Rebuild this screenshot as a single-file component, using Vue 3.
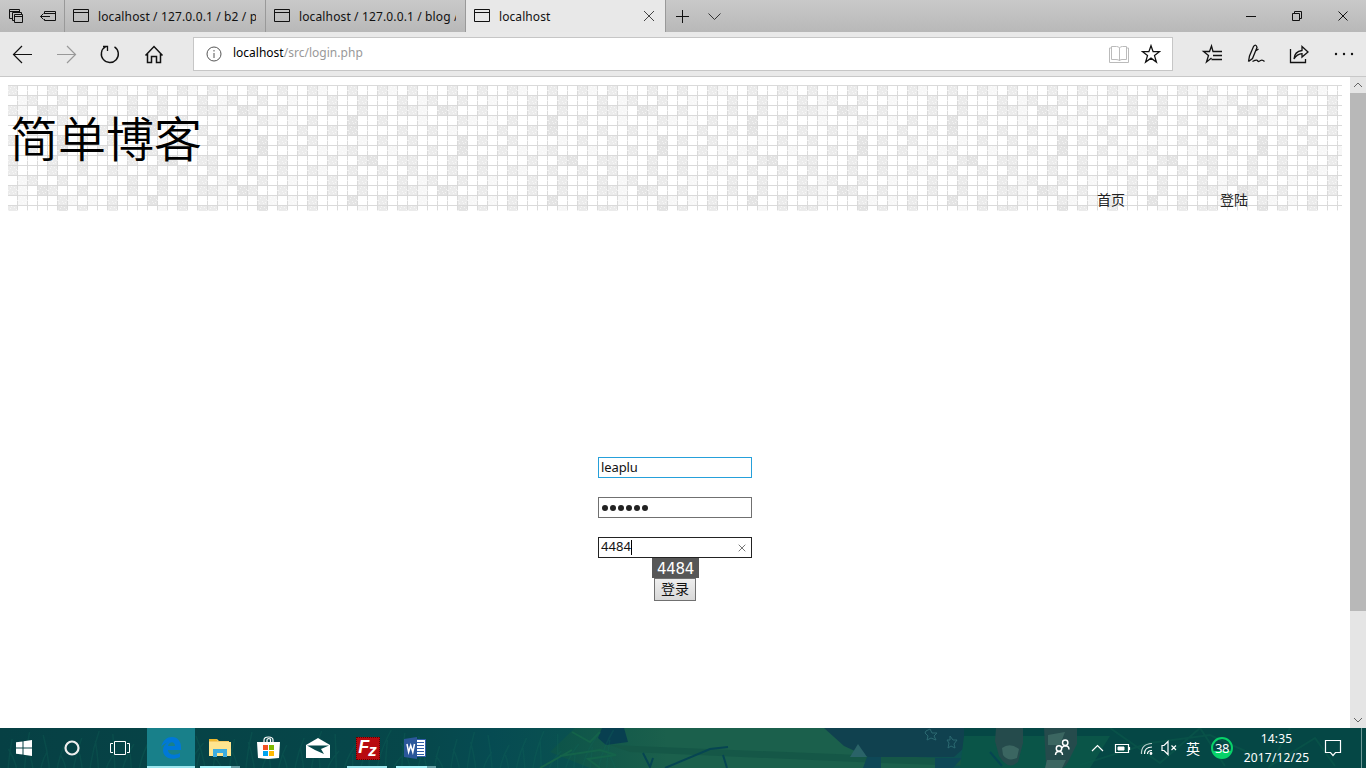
<script setup>
const tabs = [
  { title: 'localhost / 127.0.0.1 / b2 / p', active: false },
  { title: 'localhost / 127.0.0.1 / blog /', active: false },
  { title: 'localhost', active: true },
]

// Header mosaic: each string is a row of 20 cells (l = light, m = medium, d = dark)
const rows = [
  'm...m..m..ml..m..ml.',
  '.lm..m..l...m..m...m',
  'ml.dm..m....m..m...m',
  '.l...ml.l.m...d..m..',
  '..m.l....m..m.d....m',
  'm....d.m..m....l.m..',
  '..m..d...m.l.lm...l.',
  'm...m..m....m..md..m',
  'm...m..m..ml..m..m..',
  '.lm..m..l...m..m...m',
  'ml.dm..m....m..m...m',
  '.l...ml.l.m...d..m..',
  'm....d.m..m....l.m.m',
]
const fills = { l: '#f7f7f7', m: '#ebebeb', d: '#e4e4e4' }
const cells = []
rows.forEach((r, y) => [...r].forEach((c, x) => {
  if (c !== '.') cells.push({ x: x * 10, y: y * 10, fill: fills[c] })
}))

const blades = Array.from({ length: 76 }, (_, i) => {
  const x = i * 8.2
  const h = 12 + ((i * 17) % 27)
  const lean = ((i * 13) % 25) - 9
  return `M${x} 40Q${x + lean / 4} ${40 - h / 2} ${x + lean} ${40 - h}`
}).join('')
</script>

<template>
  <div class="screen">
    <header class="tabbar">
      <div class="tabtools">
        <svg width="64" height="32" fill="none" stroke="#111">
          <path d="M12 18.500H9.500V9.500H19.500V12M9.500 11.500H19M14 20.500H12.500V12.500H21.500V14M14.500 14.500H22.500V22.500H14.500zM14.500 16.500H22.500" />
          <path d="M44.500 14V11.500H55.500V20.500H44.500V19M44.500 13.500H55.500M40.500 16.500H50M43.500 13.500L40.500 16.500L43.500 19.500" />
        </svg>
      </div>
      <div v-for="t in tabs" :key="t.title" class="tab" :class="{ active: t.active }">
        <svg class="pageicon" width="16" height="14" fill="none" stroke="#111"><path d="M.5 .5H15.500V12.500H.5zM.5 3.500H15.500" /></svg>
        <span class="tabtitle">{{ t.title }}</span>
        <svg v-if="t.active" class="tabclose" width="12" height="12" stroke="#444"><path d="M1 1L11 11M11 1L1 11" /></svg>
      </div>
      <div class="newtab">
        <svg width="64" height="32" fill="none" stroke="#111"><path d="M10 16.500H23M16.500 10V23" /><path d="M42.500 13.500L48.500 19.500L54.500 13.500" stroke="#333" /></svg>
      </div>
      <svg class="wincontrols" width="138" height="32" fill="none" stroke="#111">
        <path d="M18 16.500H28M64.500 13.500H71.500V20.500H64.500zM66.500 13V11.500H73.500V18.500H72M110.500 11.500L119.500 20.500M119.500 11.500L110.500 20.500" />
      </svg>
    </header>

    <div class="toolbar">
      <svg class="nav" width="193" height="44" fill="none" stroke="#111" stroke-width="1.200">
        <path d="M13 22.500H32M22 14L13.500 22.500L22 31" />
        <path d="M57 22.500H75.500M67 14L75.500 22.500L67 31" stroke="#999" />
        <path d="M105.500 14.700A8.500 8.500 0 1 0 114.500 14.900" stroke-width="1.400" /><path d="M103 14.500H107.500V19" stroke-width="1.300" />
        <path d="M145.500 23.500L154 14.500L162.500 23.500M147.500 22V30.500H151.500V24.500H156.500V30.500H160.500V22" stroke-width="1.500" />
      </svg>
      <div class="address">
        <svg width="16" height="16" fill="none" stroke="#555"><circle cx="8" cy="8" r="7" /><path d="M8 7V12M8 4V5.500" /></svg>
        <span class="url"><b>localhost</b>/src/login.php</span>
        <svg class="reader" width="20" height="20" fill="none" stroke="#bbb"><path d="M2.500 2.500H7.500Q10 2.500 10.500 4Q11 2.500 13.500 2.500H17.500V15.500H13Q10.500 15.500 10.500 17Q10.500 15.500 7 15.500H2.500zM10.500 4V17M2.500 4H.5V18.500H19.500V4H17.500" /></svg>
        <svg class="star" width="20" height="20" fill="none" stroke="#111" stroke-width="1.300"><path d="M10 1.700L12.100 7.700H18.500L13.500 11.600L15.400 18L10 14.100L4.600 18L6.500 11.600L1.500 7.700H7.900Z" /></svg>
      </div>
      <svg class="actions" width="193" height="44" fill="none" stroke="#111" stroke-width="1.300">
        <path d="M49 19.500H40L38.500 14L36.500 19.500H30.500L35.500 23.500L33.500 30L38.500 26M40 23.500H49M38.500 27.500H49" />
        <path d="M75.500 29.500L76.500 24L80.500 14.500Q83 11.500 84 15.500L79.500 26.500L75.500 29.500M82.500 19L85.500 17M79.500 29.500Q83.500 27.500 84.500 28.500Q85 30.500 87.500 28.500Q89.500 27.500 91.500 29.500" />
        <path d="M117.500 17V30.500H132.500V27M121 27Q121.500 19.500 129 18.500V14.500L135 20L129 25V21.700Q124 22 121 27Z" />
        <g fill="#111" stroke="none"><circle cx="163" cy="22" r="1.200" /><circle cx="171" cy="22" r="1.200" /><circle cx="179" cy="22" r="1.200" /></g>
      </svg>
    </div>

    <div class="viewport">
      <main class="page">
        <div class="banner">
          <svg class="mosaic" width="1334" height="126">
            <defs>
              <pattern id="tile" width="200" height="130" patternUnits="userSpaceOnUse">
                <rect v-for="(c, i) in cells" :key="i" :x="c.x" :y="c.y" width="10" height="10" :fill="c.fill" />
              </pattern>
              <pattern id="lines" width="10" height="10" patternUnits="userSpaceOnUse">
                <path d="M0 .5H10M9.500 0V10" stroke="#dadada" fill="none" />
                <path d="M2 3h1v1h-1zM6 2h1v1h-1zM4 6h1v1h-1zM7 7h1v1h-1zM1 8h1v1h-1zM9 5h1v1h-1zM3 1h1v1h-1zM8 4h1v1h-1zM5 8h1v1h-1zM0 5h1v1h-1z" fill="#fff" fill-opacity=".6" />
              </pattern>
            </defs>
            <rect width="1334" height="126" fill="url(#tile)" />
            <rect width="1334" height="126" fill="url(#lines)" />
          </svg>
          <h1>简单博客</h1>
          <nav class="menu"><span>首页</span><span>登陆</span></nav>
        </div>
        <form class="login">
          <div class="field user">leaplu</div>
          <div class="field secret"><i v-for="n in 6" :key="n"></i></div>
          <div class="field code"><span>4484</span><em></em>
            <svg width="8" height="8" stroke="#777"><path d="M.7 .7L7.300 7.300M7.300 .7L.7 7.300" /></svg>
          </div>
          <div class="captcha">4484</div>
          <div class="submit">登录</div>
        </form>
      </main>
      <aside class="scroll">
        <svg width="16" height="16" fill="none" stroke="#666"><path d="M4 10L8 6L12 10" /></svg>
        <div class="thumb"></div>
        <svg class="down" width="16" height="16" fill="none" stroke="#666"><path d="M4 6L8 10L12 6" /></svg>
      </aside>
    </div>

    <footer class="taskbar">
      <svg class="scene" width="1366" height="40">
        <defs>
          <linearGradient id="meadow" x1="0" x2="1"><stop offset="0" stop-color="#0c5349" /><stop offset=".3" stop-color="#1b604c" /><stop offset="1" stop-color="#1b604c" /></linearGradient>
        </defs>
        <path d="M575 0H830L875 30L940 34V40H590L550 24Z" fill="url(#meadow)" />
        <path d="M610 17L860 27L1000 32V39L880 35L630 24Z" fill="#155747" />
        <path d="M824 0H964V20L954 29H868L844 18Z" fill="#10414f" />
        <path d="M867 29H881V40H863ZM935 30H962L953 40H935Z" fill="#0e4857" />
        <path d="M858 16L867 29H850Z" fill="#2a6368" />
        <path d="M602 0H624L628 14L606 17L598 10Z" fill="#083f50" />
        <path d="M964 0H1366V40H964Z" fill="#054745" />
        <path d="M964 8H1110L1090 40H960Z" fill="#0a5548" />
        <path d="M996 0H1023V15L1018 34Q1008 43 999 28L995 13ZM1044 0H1077V16L1068 34Q1060 48 1046 36Z" fill="#254b4c" />
        <path d="M1002 20Q1010 14 1019 21L1017 30Q1008 34 1003 27ZM1048 7L1065 4L1060 17H1048ZM1047 32L1066 32L1062 40H1045Z" fill="#3b6661" />
        <path :d="blades" fill="none" stroke="#13685a" stroke-opacity=".28" stroke-width="1.500" />
        <path d="M560 28L600 22L616 27L588 31L600 40M540 40L572 22M572 4L590 14L600 4" fill="none" stroke="#14634a" stroke-width="2" />
        <path d="M665 40L710 21L728 19M643 25L650 39L653 30M723 27L727 40M990 24L1002 38" fill="none" stroke="#064552" stroke-width="2" />
        <path d="M926 3L930 1L932 5L937 5L934 8L936 12L931 10L927 12L928 8L925 5ZM950 8L953 12L957 12L954 16L955 20L951 18L948 20L949 15L947 12L950 12Z" fill="none" stroke="#2b6971" />
        <path d="M1080 37L1150 15L1210 7L1265 32M1110 0L1160 35L1200 0L1225 38M1290 0L1270 38L1315 10L1335 38" fill="none" stroke="#0b5a4a" stroke-width="2" stroke-opacity=".55" />
        <path d="M1361.500 0V40" stroke="#6f9a98" />
      </svg>
      <div class="launch">
        <div class="sys"><svg width="16" height="16" fill="#fff"><path d="M0 2.300L6.500 1.400V7.500H0zM7.500 1.200L16 0V7.500H7.500zM0 8.500H6.500V14.600L0 13.700zM7.500 8.500H16V16L7.500 14.800z" /></svg></div>
        <div class="sys"><svg width="16" height="16" fill="none"><circle cx="8" cy="8" r="6.500" stroke="#eee" stroke-width="2.200" /></svg></div>
        <div class="sys wide"><svg width="20" height="16" fill="none" stroke="#fff"><path d="M4.500 1.500H15.500V14.500H4.500zM3 3.500H.5V12.500H3M17 3.500H19.500V12.500H17" /></svg></div>
        <div class="app edge"><svg width="22" height="22" viewBox="0 0 22 22"><path d="M1 10C3 3 7 0 12 0C18 0 21 5 21 10V13H8C8 18 15 19 20 16V20C12 24 3 21 3 13C3 9 6 6 9 5C5 6 2 8 1 10ZM8 9H15C15 4 9 4 8 9Z" fill="#0078d7" /></svg><u></u></div>
        <div class="app"><svg class="nudge" width="22" height="20"><path d="M0 1H8L10 3H20V18H0z" fill="#f7cb65" /><path d="M0 4H22V18H0z" fill="#ffe58f" /><path d="M4 19V11H18V19H14V15H8V19z" fill="#3cade0" /><path d="M0 1H8V3H0z" fill="#eeb82d" /></svg><u class="split"></u></div>
        <div class="app"><svg class="nudge" width="23" height="24"><path d="M0 6H23L22 22L11 23L1 22z" fill="#fff" /><path d="M7 7V4Q7 1 11.500 1Q16 1 16 4V7M10 7V4Q10.500 2 13.500 3V7" fill="none" stroke="#fff" stroke-width="1.200" /><path d="M6 9H11V14H6z" fill="#f25022" /><path d="M12 9H17V14H12z" fill="#7fba00" /><path d="M6 15H11V20H6z" fill="#00a4ef" /><path d="M12 15H17V20H12z" fill="#ffb900" /></svg></div>
        <div class="app"><svg class="nudge" width="24" height="20"><path d="M0 7L12 0L24 7V20H0z" fill="#fff" /><path d="M1 7.500H23L15 11L18 16L9 12z" fill="#06484b" /></svg></div>
        <div class="app"><div class="fz"><span>F</span><small>z</small></div><u class="fzline"></u></div>
        <div class="app"><svg class="nudge" width="23" height="22"><path d="M11 2H22V20H11z" fill="#fff" /><path d="M12 5.500H20M12 8.500H20M12 11.500H20M12 14.500H20M12 17.500H20M21.500 2V20M12 2.500H22M12 19.500H22" stroke="#315da8" /><path d="M0 2L13 0V22L0 20z" fill="#2b579a" /><path d="M3 7L4.600 15L6.700 8.500L8.800 15L10.500 7" fill="none" stroke="#fff" stroke-width="1.500" /></svg><u class="split"></u></div>
      </div>
      <div class="tray">
        <svg class="trayicons" width="134" height="40" fill="none" stroke="#fff" stroke-width="1.200">
          <circle cx="11" cy="20.500" r="2.700" stroke-width="1.500" /><circle cx="17.200" cy="14.800" r="2.700" stroke-width="1.500" />
          <path d="M7.500 27Q7.500 23.500 11 23.500Q14.500 23.500 14.500 27M14 20Q15 17.800 17.200 17.800Q21 18 21 21.500" stroke-width="1.500" />
          <path d="M44 23L49.500 17.500L55 23M67.500 16.500H80.500V24.500H67.500zM81.500 19V22" />
          <path d="M70 19H76V22H70z" fill="#fff" stroke-width="1" />
          <path d="M96.500 26Q96.500 19 104 19M99.500 26Q99.500 22.500 104 22.500" /><circle cx="103" cy="25.500" r=".8" fill="#fff" />
          <path d="M93.500 26Q93 16 104 15.500" stroke-opacity=".75" />
          <path d="M114 17.500H116L120 13.500V26.500L116 22.500H114zM123.500 17.500L128 22M128 17.500L123.500 22" />
        </svg>
        <span class="ime">英</span>
        <div class="badge">38</div>
        <div class="clock"><span>14:35</span><span>2017/12/25</span></div>
        <svg class="notice" width="18" height="18" fill="none" stroke="#fff" stroke-width="1.200"><path d="M1.500 1.500H16.500V13.500H11.500L9 16.500L6.500 13.500H1.500z" /></svg>
      </div>
    </footer>
  </div>
</template>

<style>
body { overflow: hidden; background: #fff; }
</style>
<style scoped>
* { box-sizing: border-box; }
svg { display: block; flex: none; }
.screen { width: 1366px; height: 768px; display: flex; flex-direction: column; overflow: hidden; font-family: "Noto Sans", "Noto Sans CJK SC", sans-serif; font-size: 12px; color: #111; }
.tabbar { height: 32px; flex: none; display: flex; background: linear-gradient(#c9c9c9, #b8b8b8); }
.tabtools { width: 65px; border-right: 1px solid #999; }
.tab { width: 200px; padding: 0 9px 0 8px; display: flex; align-items: center; border-right: 1px solid #999; }
.tab:nth-child(2) { width: 201px; }
.tab.active { background: #e8e8e8; }
.pageicon { margin-bottom: 0; }
.tabtitle { flex: 1; margin-left: 9px; padding-top: 1px; overflow: hidden; white-space: nowrap; letter-spacing: .13px; line-height: 20px; }
.tab.active .tabtitle { letter-spacing: .08px; }
.tabclose { margin-right: 1px; }
.wincontrols { margin-left: auto; }
.toolbar { height: 45px; flex: none; display: flex; background: #e9e9e9; border-bottom: 1px solid #c8c8c8; }
.address { width: 980px; height: 34px; margin-top: 5px; padding: 0 11px 0 12px; display: flex; align-items: center; border: 1px solid #c6c6c6; background: #fff; }
.url { margin: 0 auto 4px 11px; color: #999; letter-spacing: .02px; }
.url b { font-weight: 400; color: #000; letter-spacing: 0; }
.reader { margin-right: 12px; }
.viewport { height: 651px; flex: none; display: flex; background: #fff; }
.page { width: 1350px; padding: 8px 8px 0; }
.banner { width: 1334px; height: 126px; position: relative; font-family: "Noto Sans CJK SC", sans-serif; }
.mosaic { position: absolute; inset: 0; }
h1 { position: relative; margin: 0; padding: 27px 0 0 2px; font-size: 48px; line-height: 48px; font-weight: 350; color: #000; }
.menu { position: relative; display: flex; gap: 95px; margin: 29px 0 0 1089px; font-size: 14px; line-height: 20px; color: #222; }
.login { width: 154px; margin: 246px 0 0 590px; display: flex; flex-direction: column; align-items: center; font-size: 13px; }
.field { width: 154px; height: 21px; flex: none; margin-bottom: 19px; padding: 0 5px 0 2px; display: flex; align-items: center; border: 1px solid #707070; line-height: 17px; letter-spacing: -.1px; }
.user { border-color: #26a0da; }
.secret i { width: 6px; height: 6px; border-radius: 50%; margin: 1px 1px 0; background: #222; }
.secret i + i { margin-left: 1px; }
.code { margin-bottom: 0; border-color: #222; }
.code span { margin-bottom: 2px; letter-spacing: .1px; }
.code em { width: 1px; height: 15px; background: #000; }
.code svg { margin-left: auto; }
.captcha { width: 47px; height: 20px; margin-left: 1px; background: #575757; color: #fff; font: 15px/23px "DejaVu Sans", sans-serif; letter-spacing: -.3px; text-align: center; }
.submit { width: 42px; height: 23px; border: 1px solid #707070; background: linear-gradient(#eee, #d8d8d8); text-align: center; font: 14px/18px "Noto Sans CJK SC", sans-serif; }
.scroll { width: 16px; background: #e5e5e5; display: flex; flex-direction: column; }
.thumb { height: 518px; background: #b8b8b8; }
.down { margin-top: auto; }
.taskbar { height: 40px; flex: none; position: relative; display: flex; background: linear-gradient(90deg, #064044, #06474a 30%, #064b52 36%, #0a5250 43%, #105055 100%); color: #fff; }
.scene { position: absolute; inset: 0; }
.launch, .tray { position: relative; display: flex; }
.sys { width: 48px; display: flex; align-items: center; justify-content: center; }
.sys.wide { width: 51px; padding-right: 3px; }
.app { width: 49px; position: relative; display: flex; align-items: center; justify-content: center; }
.app.edge { width: 48px; margin-right: 1px; background: #18808a; }
.nudge { margin-right: 2px; }
.app u { position: absolute; left: 4px; bottom: 0; width: 40px; height: 2px; background: #9ce7ef; }
.app.edge u { left: 0; width: 48px; }
.app u.split { background: linear-gradient(90deg, #a6f3fa 31px, #659fa5 31px); }
.fz { width: 24px; height: 23px; border: 1px dotted #610000; background: #b80b10; display: flex; justify-content: center; font: italic bold 18px/19px "Liberation Sans", sans-serif; }
.fz small { margin-top: 3px; font-size: 17px; }
.fz span { width: 10px; }
.tray { margin-left: auto; align-items: center; }
.trayicons { margin-right: 4px; }
.ime { width: 14px; margin-right: 11px; font: 14px/20px "Noto Sans CJK SC", sans-serif; }
.badge { width: 22px; height: 22px; margin-right: 10px; border: 2px solid #08d269; border-radius: 50%; background: linear-gradient(transparent 65%, #08d269 65%); font-size: 13px; line-height: 18px; text-align: center; letter-spacing: -.4px; }
.clock { width: 67px; display: flex; flex-direction: column; align-items: center; line-height: 19px; padding-bottom: 1px; letter-spacing: .15px; white-space: nowrap; }
.notice { margin: 0 24px 0 14px; }
</style>
